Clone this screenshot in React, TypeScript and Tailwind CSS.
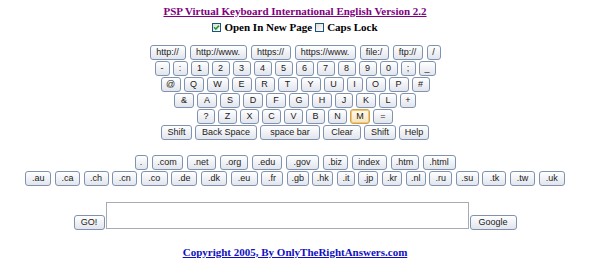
import React from 'react';

type K = [string, string];

const row1: K[] = [
  ['http://', 'w-[36px]'], ['http://www.', 'w-[57px]'], ['https://', 'w-[40px]'], ['https://www.', 'w-[61px]'],
  ['file:/', 'w-[29px]'], ['ftp://', 'w-[30px]'], ['/', 'w-[14px]'],
];
const row2: K[] = [
  ['-', 'w-[15px]'], [':', 'w-[15px]'], ['1', 'w-[18px]'], ['2', 'w-[18px]'], ['3', 'w-[18px]'], ['4', 'w-[18px]'],
  ['5', 'w-[18px]'], ['6', 'w-[18px]'], ['7', 'w-[18px]'], ['8', 'w-[18px]'], ['9', 'w-[18px]'], ['0', 'w-[18px]'],
  [';', 'w-[15px]'], ['_', 'w-[17px]'],
];
const row3: K[] = [
  ['@', 'w-[20px]'], ['Q', 'w-[20px]'], ['W', 'w-[22px]'], ['E', 'w-[20px]'], ['R', 'w-[20px]'], ['T', 'w-[20px]'],
  ['Y', 'w-[20px]'], ['U', 'w-[20px]'], ['I', 'w-[16px]'], ['O', 'w-[20px]'], ['P', 'w-[20px]'], ['#', 'w-[18px]'],
];
const row4: K[] = [
  ['&', 'w-[20px]'], ['A', 'w-[20px]'], ['S', 'w-[20px]'], ['D', 'w-[20px]'], ['F', 'w-[20px]'], ['G', 'w-[20px]'],
  ['H', 'w-[20px]'], ['J', 'w-[18px]'], ['K', 'w-[20px]'], ['L', 'w-[18px]'], ['+', 'w-[16px]'],
];
const row5: K[] = [
  ['?', 'w-[18px]'], ['Z', 'w-[19px]'], ['X', 'w-[19px]'], ['C', 'w-[19px]'], ['V', 'w-[19px]'], ['B', 'w-[19px]'],
  ['N', 'w-[19px]'], ['M', 'w-[20px]'], ['=', 'w-[20px]'],
];
const row6: K[] = [
  ['Shift', 'w-[31px]'], ['Back Space', 'w-[62px]'], ['space bar', 'w-[60px]'], ['Clear', 'w-[38px]'],
  ['Shift', 'w-[32px]'], ['Help', 'w-[30px]'],
];
const tld1: K[] = [
  ['.', 'w-[13px]'], ['.com', 'w-[31px]'], ['.net', 'w-[29px]'], ['.org', 'w-[28px]'], ['.edu', 'w-[30px]'],
  ['.gov', 'w-[33px]'], ['.biz', 'w-[25px]'], ['index', 'w-[35px]'], ['.htm', 'w-[28px]'], ['.html', 'w-[33px]'],
];
const tld2: K[] = [
  ['.au', 'w-[26px]'], ['.ca', 'w-[25px]'], ['.ch', 'w-[25px]'], ['.cn', 'w-[25px]'], ['.co', 'w-[27px]'],
  ['.de', 'w-[26px]'], ['.dk', 'w-[26px]'], ['.eu', 'w-[27px]'], ['.fr', 'w-[22px]'], ['.gb', 'w-[22px]'],
  ['.hk', 'w-[21px]'], ['.it', 'w-[18px]'], ['.jp', 'w-[20px]'], ['.kr', 'w-[20px]'], ['.nl', 'w-[20px]'],
  ['.ru', 'w-[23px]'], ['.su', 'w-[23px]'], ['.tk', 'w-[24px]'], ['.tw', 'w-[25px]'], ['.uk', 'w-[26px]'],
];

function Key({ label, w, hot }: { label: string; w: string; hot?: boolean }) {
  return (
    <button
      className={`${w} h-[15px] shrink-0 flex items-center justify-center rounded-[3px] border text-[9px] leading-none text-[#1a1a1a] whitespace-nowrap ${
        hot
          ? 'border-[#c9a35c] bg-linear-to-b from-[#fffaf0] to-[#f6e3b8] shadow-[inset_0_0_0_1px_#f7c56a]'
          : 'border-[#7f93b0] bg-linear-to-b from-white to-[#e2e5ec]'
      }`}
    >
      {label}
    </button>
  );
}

function Row({ keys, gap = 'gap-[3px]' }: { keys: K[]; gap?: string }) {
  return (
    <div className={`flex justify-center ${gap}`}>
      {keys.map(([l, w], i) => (
        <Key key={i} label={l} w={w} hot={l === 'M'} />
      ))}
    </div>
  );
}

function Box({ checked }: { checked?: boolean }) {
  return (
    <span className="w-[9px] h-[9px] shrink-0 border border-[#1c5180] bg-linear-to-br from-[#dcdcd6] to-white flex items-center justify-center">
      {checked && (
        <svg width="7" height="7" viewBox="0 0 7 7">
          <path d="M1 3.2 L2.8 5 L6 1.6" fill="none" stroke="#21a121" strokeWidth="1.6" />
        </svg>
      )}
    </span>
  );
}

export default function App() {
  return (
    <div className="w-[590px] bg-white pt-[4px] flex flex-col items-center">
      <a className="h-[14px] text-[11px] leading-[14px] font-bold underline text-[#800080] font-['Liberation_Serif',serif]">
        PSP Virtual Keyboard International English Version 2.2
      </a>
      <div className="mt-[2px] h-[14px] flex items-center gap-[3px] text-[11px] leading-[14px] font-bold text-black font-['Liberation_Serif',serif]">
        <Box checked />
        <span>Open In New Page</span>
        <Box />
        <span>Caps Lock</span>
      </div>

      <div className="mt-[11px] flex flex-col gap-[1px] font-['Liberation_Sans',sans-serif]">
        <Row keys={row1} gap="gap-[4px]" />
        <Row keys={row2} />
        <Row keys={row3} />
        <Row keys={row4} />
        <Row keys={row5} />
        <Row keys={row6} />
      </div>

      <div className="mt-[15px] flex flex-col gap-[1px] font-['Liberation_Sans',sans-serif]">
        <Row keys={tld1} gap="gap-[4px]" />
        <Row keys={tld2} gap="gap-[3.6px]" />
      </div>

      <div className="mt-[16px] flex items-end gap-[1px] font-['Liberation_Sans',sans-serif]">
        <div className="mb-[-1px]">
          <Key label="GO!" w="w-[31px]" />
        </div>
        <textarea className="w-[363px] h-[27px] resize-none border border-[#a5acb5] bg-white outline-none" />
        <div className="mb-[-1px]">
          <Key label="Google" w="w-[47px]" />
        </div>
      </div>

      <a className="mt-[16px] h-[14px] text-[11px] leading-[14px] font-bold underline text-[#1010c0] font-['Liberation_Serif',serif]">
        Copyright 2005, By OnlyTheRightAnswers.com
      </a>
    </div>
  );
}
